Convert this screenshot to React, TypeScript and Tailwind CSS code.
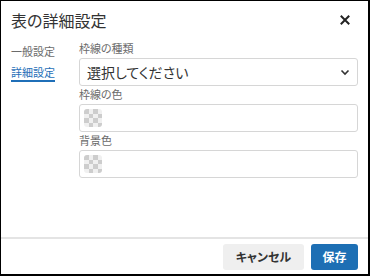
const font = "font-['Noto_Sans_CJK_JP','Noto_Sans',sans-serif] [font-feature-settings:'palt']";

const cells = Array.from({ length: 16 }, (_, i) => (Math.floor(i / 4) + (i % 4)) % 2 === 0);

const Swatch = () => (
  <div className="w-[18px] h-[18px] rounded-[3px] overflow-hidden grid grid-cols-4 grid-rows-4">
    {cells.map((dark, i) => (
      <div key={i} className={dark ? "bg-[#cdcdcd]" : "bg-[#f0f0f0]"} />
    ))}
  </div>
);

const Field: React.FC<{ label: string; children: React.ReactNode }> = ({ label, children }) => (
  <div className="flex flex-col">
    <div className="h-[18px] flex items-end pb-[3px] text-[11px] leading-[14px] text-[#6b6b6b]">{label}</div>
    <div className="h-[28px] border border-[#d6d6d6] rounded-[3px] flex items-center px-[4px] bg-white">
      {children}
    </div>
  </div>
);

export default function App() {
  return (
    <div className={`w-[370px] h-[276px] bg-white border-t border-l border-r-2 border-b-2 border-black flex flex-col ${font}`}>
      <div className="h-[37px] flex items-center justify-between pl-[10px] pr-[18px]">
        <h2 className="text-[16px] leading-[20px] text-[#333]">表の詳細設定</h2>
        <svg width="10" height="10" viewBox="0 0 10 10" className="text-[#222]">
          <path d="M1.5 1.5L8.5 8.5M8.5 1.5L1.5 8.5" stroke="currentColor" strokeWidth="2" strokeLinecap="square" />
        </svg>
      </div>

      <div className="flex-1 flex pt-[2px]">
        <nav className="w-[78px] pl-[10px] pt-[4px] flex flex-col items-start gap-[7px] text-[11px] leading-[14px]">
          <span className="text-[#6b6b6b]">一般設定</span>
          <span className="text-[#1f6fb8] border-b-2 border-[#1f6fb8] pb-[1px]">詳細設定</span>
        </nav>

        <div className="flex-1 pr-[10px] flex flex-col">
          <Field label="枠線の種類">
            <span className="flex-1 pl-[3px] text-[14px] text-[#333]">選択してください</span>
            <svg width="10" height="7" viewBox="0 0 10 7" className="mr-[3px] text-[#333]">
              <path d="M1.5 1.5L5 5L8.5 1.5" fill="none" stroke="currentColor" strokeWidth="1.6" />
            </svg>
          </Field>
          <Field label="枠線の色">
            <Swatch />
          </Field>
          <Field label="背景色">
            <Swatch />
          </Field>
        </div>
      </div>

      <div className="h-[37px] border-t-2 border-[#e4e4e4] flex items-center justify-end gap-[7px] pr-[10px]">
        <button className="w-[81px] h-[26px] rounded-[3px] bg-[#efefef] text-[12px] font-bold text-[#333]">キャンセル</button>
        <button className="w-[47px] h-[26px] rounded-[3px] bg-[#1d6fb4] text-[12px] font-bold text-white">保存</button>
      </div>
    </div>
  );
}
